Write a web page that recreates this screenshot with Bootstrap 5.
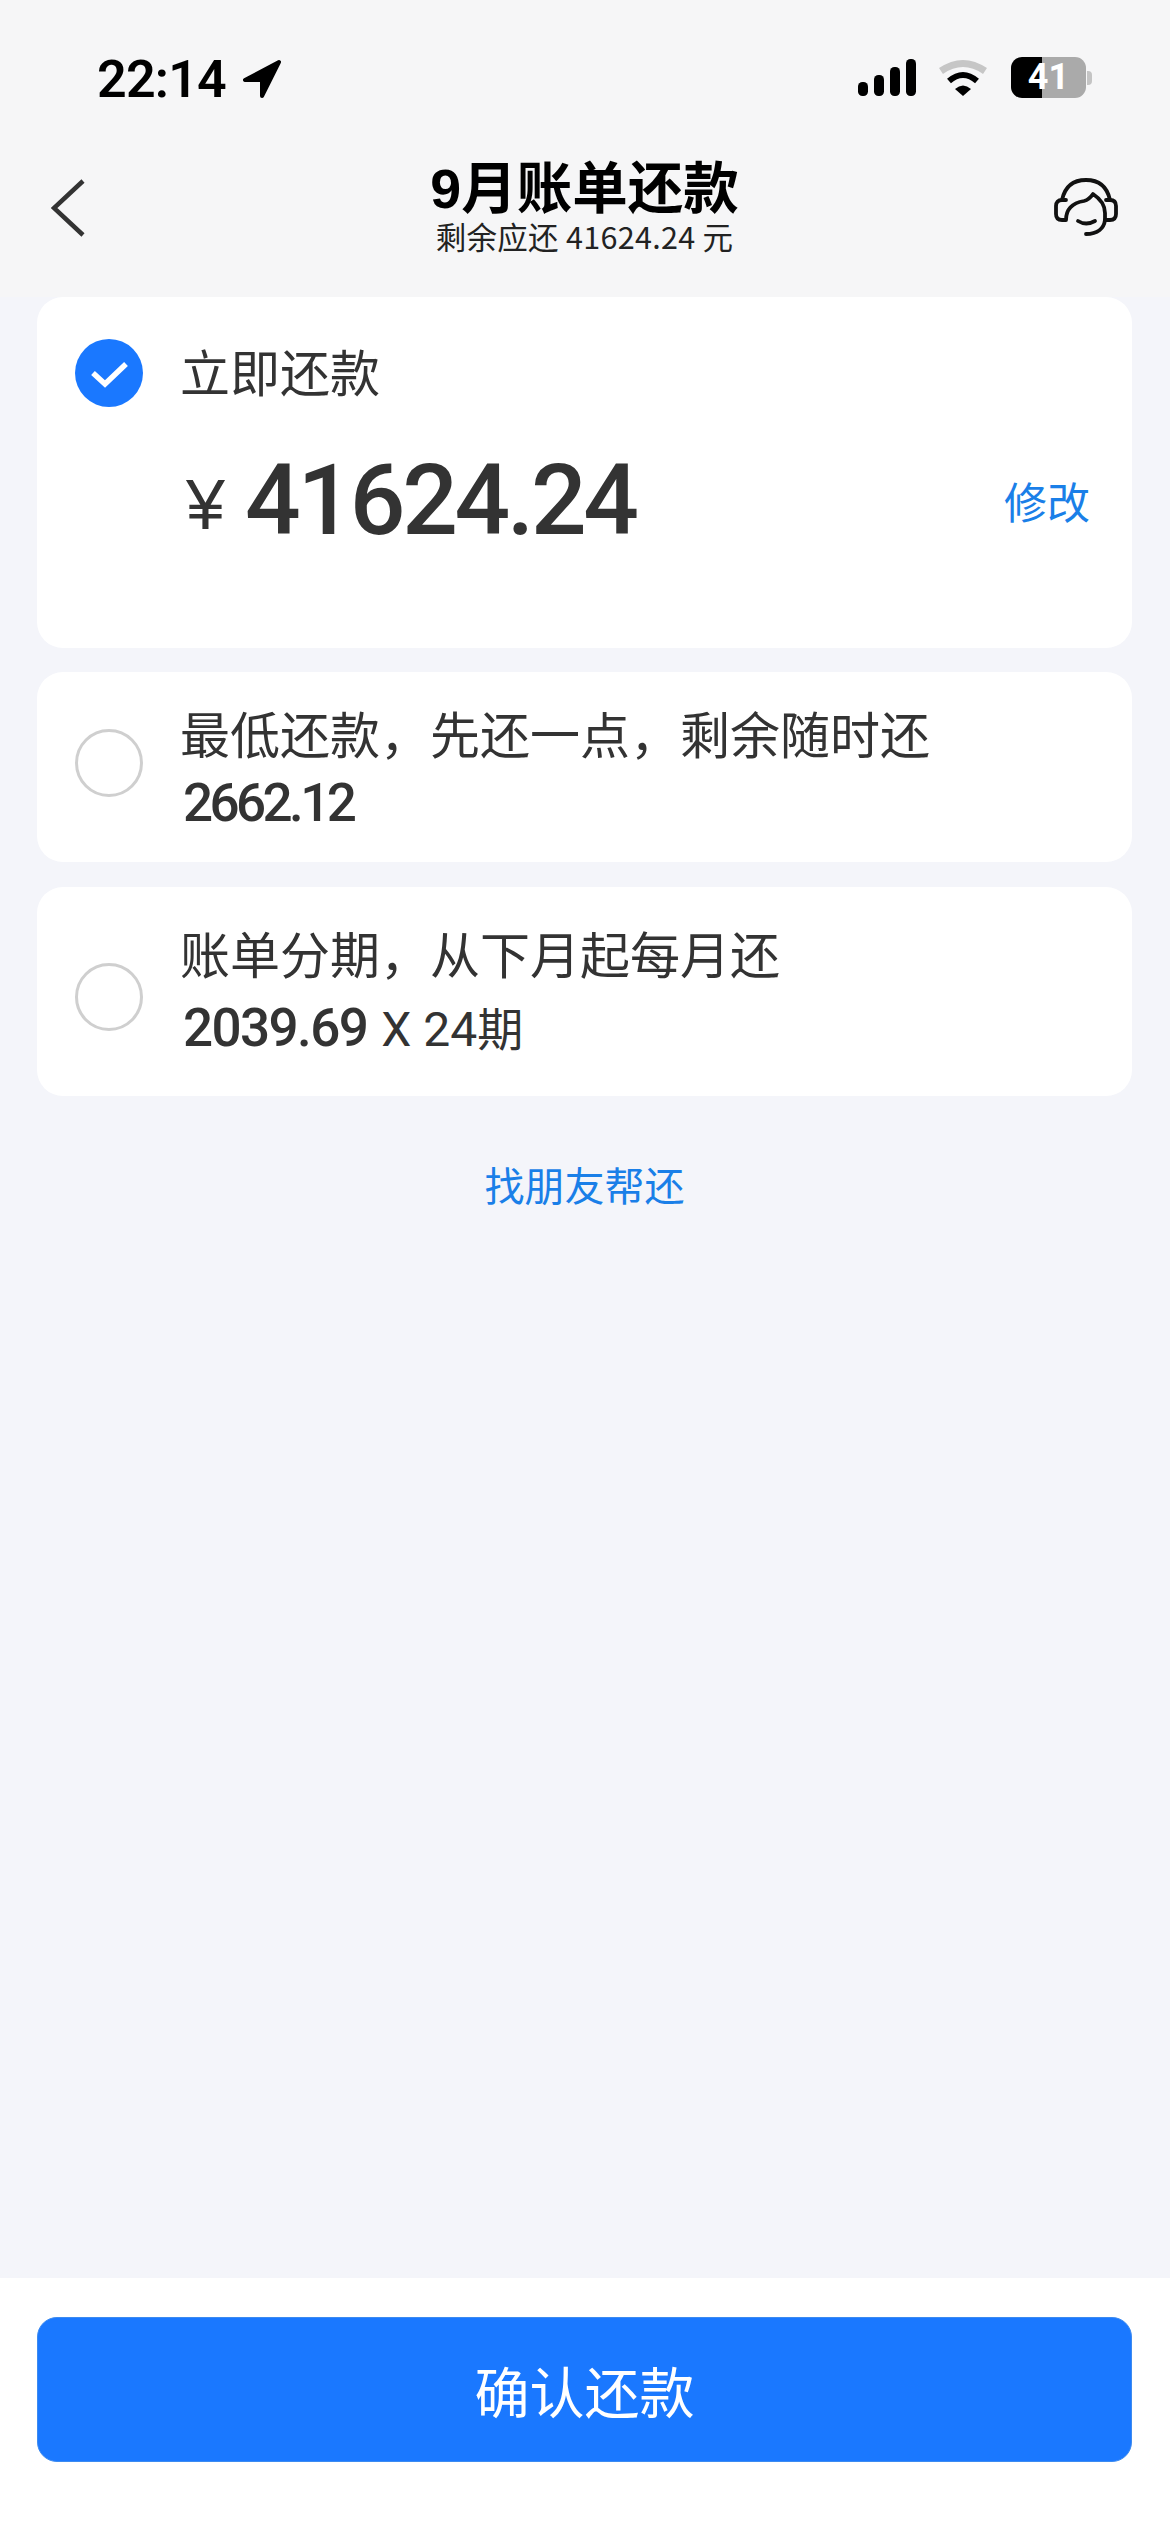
<!DOCTYPE html>
<html lang="zh-CN">
<head>
<meta charset="utf-8">
<title>9月账单还款</title>
<link rel="stylesheet" href="https://cdn.jsdelivr.net/npm/bootstrap@5.3.0/dist/css/bootstrap.min.css">
<style>
html,body{margin:0;background:#f4f5fa}
body{font-family:"Noto Sans CJK SC","Liberation Sans",sans-serif;color:#333}
.shell{width:1170px;height:2532px}
.topzone{background:#f6f6f7;height:297px}
.statusrow{height:160px;padding:59px 78px 0 97px}
.clock{font-family:Roboto,"Liberation Sans",sans-serif;font-weight:600;font-size:52px;line-height:41px;letter-spacing:-.8px;color:#000}
.arrowicon{width:40px;height:40px;margin-left:16px}
.signalicon{width:58px;height:37px;margin-top:0}
.wifiicon{width:50px;height:37px;margin:0 23px 0 22px}
.batt{width:75px;height:41px;margin-top:-2px;border-radius:11px;background:linear-gradient(to right,#000 41%,#aaa 41%);color:#fff;font-family:Roboto,"Liberation Sans",sans-serif;font-weight:700;font-size:36px;line-height:41px;text-align:center}
.battnub{width:5px;height:14px;margin:12px 0 0 1px;background:#c4c4c4;border-radius:0 4px 4px 0}
.navrow{height:137px;padding:0 52px 0 51px;display:grid;grid-template-columns:1fr auto 1fr;align-items:start}
.backicon{width:34px;height:58px;margin-top:19px}
.heads{width:64px;height:58px;margin-top:18px;justify-self:end}
.titlewrap{padding-top:3px;text-align:center}
.pagetitle{font-size:55.5px;font-weight:700;line-height:52px;color:#000;white-space:nowrap;font-family:"Liberation Sans","Noto Sans CJK SC",sans-serif}
.subtitle{font-size:30.5px;line-height:31px;letter-spacing:.3px;color:#222;white-space:nowrap;margin-top:6px}
.mainzone{padding:0 38px 0 37px;background:#f4f5fa;flex:1 1 auto}
.paycard{border:0;border-radius:26px;background:#fff;margin-bottom:24px;padding-left:38px;padding-right:42px;color:#333}
.cardone{height:351px;padding-top:42px}
.cardtwo{height:190px}
.cardthree{height:209px;margin-top:25px}
.dot{width:68px;height:68px;border-radius:50%;flex:0 0 68px;margin-right:37px;background:#fff;border:3px solid #cfcfcf}
.dot.sel{background:#1a78ff;border:0}
.dot.sel svg{width:68px;height:68px;display:block}
.cardone .optlabel{margin-top:-6px}
.cardtwo .dot{margin-top:-8px}
.cardthree .dot{margin-top:10px}
.optlabel{font-size:50px;line-height:68px;white-space:nowrap}
.stacktwo{margin-top:-3px}
.stacktwo .optlabel{margin-bottom:7px}
.stackthree{margin-top:-6px}
.stackthree .optlabel{margin-bottom:10px}
.amountrow{padding-left:110px;margin-top:44px;height:100px}
.yen{font-family:"Liberation Sans",sans-serif;font-size:70px;line-height:70px;margin-top:19px;margin-left:1px;width:59px}
.bigamount{font-family:Roboto,"Liberation Sans",sans-serif;font-weight:500;font-size:98px;line-height:100px;letter-spacing:-3.3px}
.editlink{font-size:43px;line-height:60px;color:#1a7fe8;text-decoration:none;margin-left:auto;margin-top:19px}
.subnum{font-family:Roboto,"Liberation Sans",sans-serif;font-weight:500;font-size:53px;line-height:60px;letter-spacing:-3.6px;white-space:nowrap;padding-left:3px}
.stackthree .subnum{letter-spacing:-1.6px}
.subnum .thin{font-weight:400;font-size:48px;margin-left:14px;letter-spacing:0}
.subnum .cjkpart{font-family:"Noto Sans CJK SC",sans-serif;font-weight:400;font-size:46px;letter-spacing:0}
.friendlink{display:block;text-align:center;font-size:40px;line-height:60px;color:#1a7fe8;text-decoration:none;margin-top:58px}
.footzone{background:#fff;height:254px;padding:39px 38px 0 37px}
.confirmbtn{height:145px;width:100%;border-radius:20px;background:#1a78ff;border:1px solid #3d8bf0;color:#fff;font-size:55px;line-height:1;display:block}
.confirmbtn:hover{background:#1a78ff;color:#fff}
</style>
</head>
<body>
<div class="shell d-flex flex-column">
  <div class="topzone">
    <div class="statusrow d-flex align-items-start">
      <span class="clock">22:14</span>
      <svg class="arrowicon" viewBox="0 0 40 40"><path d="M37 3 L3 21 H20 V37 Z" fill="#000" stroke="#000" stroke-width="4" stroke-linejoin="round"/></svg>
      <svg class="signalicon ms-auto" viewBox="0 0 58 37"><rect x="0" y="23" width="10" height="14" rx="4.5"/><rect x="16" y="16" width="10" height="21" rx="4.5"/><rect x="32" y="8" width="10" height="29" rx="4.5"/><rect x="48" y="0" width="10" height="37" rx="4.5"/></svg>
      <svg class="wifiicon" viewBox="0 0 50 37"><path d="M3 12 Q25 -3 47 12" fill="none" stroke="#c6c6c6" stroke-width="7"/><path d="M11 22 Q25 10 39 22" fill="none" stroke="#000" stroke-width="6"/><path d="M25 37 L17 30 Q25 23 33 30 Z" fill="#000"/></svg>
      <div class="batt">41</div>
      <div class="battnub"></div>
    </div>
    <div class="navrow">
      <svg class="backicon" viewBox="0 0 34 58"><path d="M32 2 L3 29 L32 56" fill="none" stroke="#333" stroke-width="4.5"/></svg>
      <div class="titlewrap">
        <div class="pagetitle">9月账单还款</div>
        <div class="subtitle">剩余应还 41624.24 元</div>
      </div>
      <svg class="heads" viewBox="0 0 64 58" fill="none" stroke="#111" stroke-width="3.8" stroke-linecap="round" stroke-linejoin="round"><path d="M8 22 C11 8 20 2 32 2 C44 2 53 8 56 22"/><path d="M12 22 H8 Q2 22 2 28 V36 Q2 42 8 42 H12 C12 31 18 25 30 23 C34 22 37 19 39 16 C45 20 51 27 51 35 V42 H56 Q62 42 62 36 V28 Q62 22 56 22 H52"/><path d="M51 42 C50 50 44 56 32 56"/><path d="M24 43 Q32 48 41 43"/></svg>
    </div>
  </div>
  <div class="mainzone">
    <div class="card paycard cardone">
      <div class="d-flex align-items-center">
        <span class="dot sel"><svg viewBox="0 0 68 68"><path d="M18 34 L30 45 L51 25" fill="none" stroke="#fff" stroke-width="5.5"/></svg></span>
        <span class="optlabel">立即还款</span>
      </div>
      <div class="d-flex amountrow">
        <span class="yen">¥</span>
        <span class="bigamount">41624.24</span>
        <a class="editlink" href="#">修改</a>
      </div>
    </div>
    <div class="card paycard cardtwo flex-row align-items-center">
      <span class="dot"></span>
      <div class="stacktwo">
        <div class="optlabel">最低还款，先还一点，剩余随时还</div>
        <div class="subnum">2662.12</div>
      </div>
    </div>
    <div class="card paycard cardthree flex-row align-items-center">
      <span class="dot"></span>
      <div class="stackthree">
        <div class="optlabel">账单分期，从下月起每月还</div>
        <div class="subnum">2039.69<span class="thin">X 24</span><span class="cjkpart">期</span></div>
      </div>
    </div>
    <a class="friendlink" href="#">找朋友帮还</a>
  </div>
  <div class="footzone">
    <button type="button" class="btn confirmbtn">确认还款</button>
  </div>
</div>
<script src="https://cdn.jsdelivr.net/npm/bootstrap@5.3.0/dist/js/bootstrap.bundle.min.js"></script>
</body>
</html>
